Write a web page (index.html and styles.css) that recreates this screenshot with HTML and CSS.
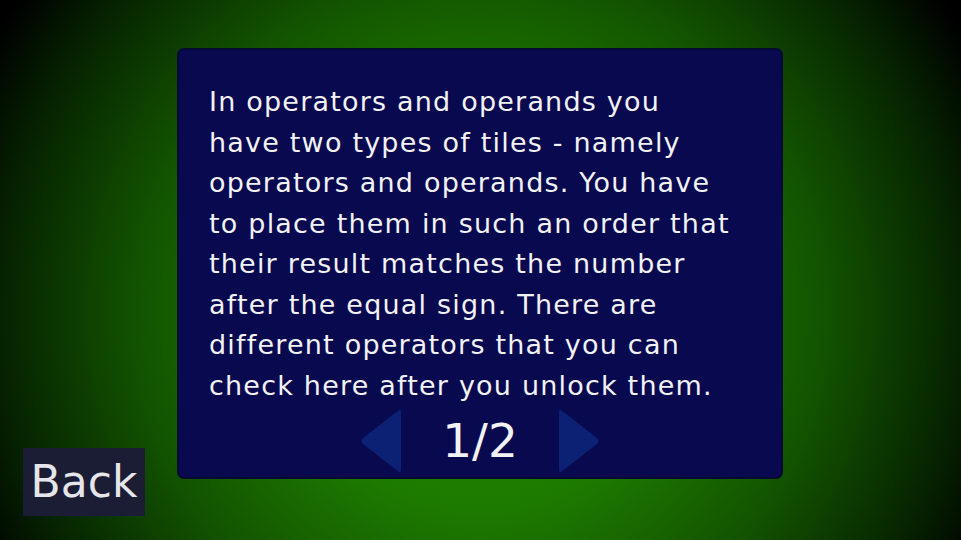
FILE: index.html
```html
<!DOCTYPE html>
<html>
<head>
<meta charset="utf-8">
<link rel="stylesheet" href="styles.css">
</head>
<body>
<div class="stage">
  <div class="panel">
    <p class="text">In operators and operands you<br>have two types of tiles - namely<br>operators and operands. You have<br>to place them in such an order that<br>their result matches the number<br>after the equal sign. There are<br>different operators that you can<br>check here after you unlock them.</p>
    <div class="pager">
      <svg class="arrow" width="42" height="66" viewBox="0 0 42 66"><path d="M39 2 Q41 1 41 5 L41 61 Q41 65 39 64 L3 36 Q0 33 3 30 Z" fill="#0c2173"/></svg>
      <span class="page">1/2</span>
      <svg class="arrow" width="42" height="66" viewBox="0 0 42 66"><path d="M3 2 Q1 1 1 5 L1 61 Q1 65 3 64 L39 36 Q42 33 39 30 Z" fill="#0c2173"/></svg>
    </div>
  </div>
  <div class="back">Back</div>
</div>
</body>
</html>
```
FILE: styles.css
```css
html, body {
  margin: 0;
  padding: 0;
  width: 961px;
  height: 540px;
  overflow: hidden;
}
body {
  background: radial-gradient(circle 560px at 50% 58%, #228c00 0%, #1d7a00 35%, #125200 62%, #062400 85%, #000 100%);
  font-family: "DejaVu Sans", "Noto Sans", sans-serif;
  color: #f2f2f4;
}
.stage {
  display: grid;
  width: 961px;
  height: 540px;
}
.panel {
  grid-area: 1 / 1;
  justify-self: start;
  align-self: start;
  margin: 48px 0 0 177px;
  width: 602px;
  height: 427px;
  background: #08094f;
  border: 2px solid #050a30;
  border-radius: 7px;
  display: flex;
  flex-direction: column;
}
.text {
  margin: 32px 0 0 30px;
  font-size: 27px;
  letter-spacing: 1.2px;
  line-height: 40.5px;
  white-space: nowrap;
}
.pager {
  display: flex;
  align-items: center;
  justify-content: center;
  gap: 40px;
  margin-top: 2px;
}
.page {
  font-size: 47px;
  line-height: 64px;
}
.back {
  grid-area: 1 / 1;
  justify-self: start;
  align-self: end;
  margin: 0 0 24px 23px;
  width: 122px;
  height: 68px;
  background: #1b1d35;
  font-size: 44px;
  line-height: 68px;
  text-align: center;
  color: #e6e6ea;
}
```
